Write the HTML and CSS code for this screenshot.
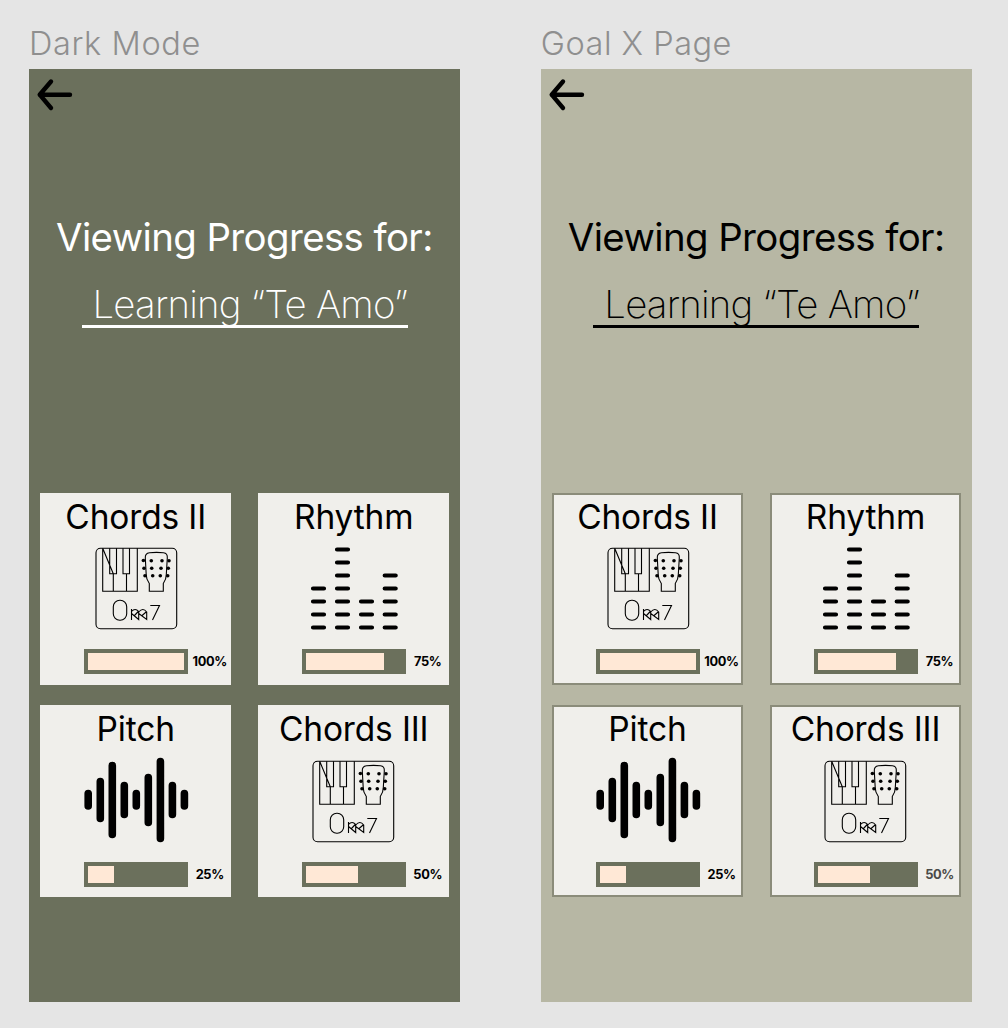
FILE: index.html
```
<!DOCTYPE html>
<html lang="en">
<head>
<meta charset="utf-8">
<title>Goal progress</title>
<link rel="stylesheet" href="styles.css">
</head>
<body>
<svg class="defs" aria-hidden="true">
  <symbol id="arrow" viewBox="0 0 40 36">
    <path d="M4.700 17.700H35M16 4.500L4.700 17.700L16 31" fill="none" stroke="currentColor" stroke-width="4.400" stroke-linecap="round" stroke-linejoin="round"/>
  </symbol>
  <symbol id="chords" viewBox="80 542 112 96">
    <g fill="none" stroke="#000" stroke-width="1.100">
      <rect x="96" y="548.300" width="80.700" height="80.500" rx="4.500"/>
      <path d="M102.700 548.300V591.300H137.300V548.300M109.700 548.300V565.500M113.300 573.700H116.500V548.300M123 548.300V573.700H129.500V548.300M109.700 565.500V573.700H113.300M113.300 573.700V591.300M126.500 573.700V591.300M102.700 548.300L113.300 573.700"/>
      <path d="M149.300 591.300V583.500C147 580.500 146.200 578 146.200 574.500L145.300 558Q145 553.200 149.500 552.700Q156.500 552 163.500 552.700Q167.700 553.100 167.300 558L166.300 574.500C166.300 578.500 165.500 580.500 163.300 583.500V591.300Z"/>
      <rect x="113.300" y="600.300" width="13.400" height="20" rx="6.500"/>
      <path d="M131.500 620V609M131.500 611.500Q135 607.500 138.700 611.500V619.500L131.500 613.500M138.700 612Q143 607 146.700 612V619.500L138.700 613.500M138.700 611L134.500 615.500M146.700 611.500L141.500 616M150.300 605.500H159.500L152.500 620"/>
    </g>
    <g>
      <circle cx="143.400" cy="560.500" r="1.800"/><circle cx="151.300" cy="560.700" r="1.800"/><circle cx="162" cy="560.700" r="1.800"/><circle cx="169" cy="560.700" r="1.800"/>
      <circle cx="144" cy="568.200" r="1.800"/><circle cx="151.700" cy="568.200" r="1.800"/><circle cx="161" cy="568.200" r="1.800"/><circle cx="168.300" cy="568.200" r="1.800"/>
      <circle cx="145" cy="575.700" r="1.800"/><circle cx="152.700" cy="575.700" r="1.800"/><circle cx="160.300" cy="575.700" r="1.800"/><circle cx="167.700" cy="575.700" r="1.800"/>
    </g>
  </symbol>
  <symbol id="rhythm" viewBox="298 542 112 96">
    <path fill="none" stroke="#000" stroke-width="4.200" stroke-linecap="round" d="M313 588.500h11M313 601.500h11M313 614.500h11M313 627.500h11M337 549.500h11M337 562.500h11M337 575.500h11M337 588.500h11M337 601.500h11M337 614.500h11M337 627.500h11M361 601.500h11M361 614.500h11M361 627.500h11M384.700 575.500h11M384.700 588.500h11M384.700 601.500h11M384.700 614.500h11M384.700 627.500h11"/>
  </symbol>
  <symbol id="pitch" viewBox="80 754.500 112 96">
    <path fill="none" stroke="#000" stroke-width="7.600" stroke-linecap="round" d="M88.200 793v12.500M100.300 781v37M112.300 765v69M124.300 785v29M136.300 793v12.500M148.300 777v45M160.400 761v77M172.400 785v29M184.400 793v12.500"/>
  </symbol>
</svg>
<main class="board">
  <section class="frame dark">
    <h2 class="frame-label">Dark Mode</h2>
    <div class="screen">
      <svg class="back"><use href="#arrow"/></svg>
      <h1 class="heading">Viewing Progress for:</h1>
      <p class="goal">Learning “Te Amo”</p>
      <div class="cards">
        <article class="card"><h3>Chords II</h3><svg class="icon"><use href="#chords"/></svg><div class="progress"><div class="bar"><div class="fill" style="width:100%"></div></div><span class="pct">100%</span></div></article>
        <article class="card"><h3>Rhythm</h3><svg class="icon"><use href="#rhythm"/></svg><div class="progress"><div class="bar"><div class="fill" style="width:81.500%"></div></div><span class="pct">75%</span></div></article>
        <article class="card"><h3>Pitch</h3><svg class="icon"><use href="#pitch"/></svg><div class="progress"><div class="bar"><div class="fill" style="width:27.500%"></div></div><span class="pct">25%</span></div></article>
        <article class="card"><h3>Chords III</h3><svg class="icon shifted"><use href="#chords"/></svg><div class="progress"><div class="bar"><div class="fill" style="width:54%"></div></div><span class="pct">50%</span></div></article>
      </div>
    </div>
  </section>
  <section class="frame light">
    <h2 class="frame-label">Goal X Page</h2>
    <div class="screen">
      <svg class="back"><use href="#arrow"/></svg>
      <h1 class="heading">Viewing Progress for:</h1>
      <p class="goal">Learning “Te Amo”</p>
      <div class="cards">
        <article class="card"><h3>Chords II</h3><svg class="icon"><use href="#chords"/></svg><div class="progress"><div class="bar"><div class="fill" style="width:100%"></div></div><span class="pct">100%</span></div></article>
        <article class="card"><h3>Rhythm</h3><svg class="icon"><use href="#rhythm"/></svg><div class="progress"><div class="bar"><div class="fill" style="width:81.500%"></div></div><span class="pct">75%</span></div></article>
        <article class="card"><h3>Pitch</h3><svg class="icon"><use href="#pitch"/></svg><div class="progress"><div class="bar"><div class="fill" style="width:27.500%"></div></div><span class="pct">25%</span></div></article>
        <article class="card"><h3>Chords III</h3><svg class="icon shifted"><use href="#chords"/></svg><div class="progress"><div class="bar"><div class="fill" style="width:54%"></div></div><span class="pct muted">50%</span></div></article>
      </div>
    </div>
  </section>
</main>
</body>
</html>
```
FILE: styles.css
```
* { box-sizing: border-box; margin: 0; }
body { background: #e5e5e5; font-family: Inter, sans-serif; font-optical-sizing: none; color: #000; }
.defs { display: none; }
.board { display: flex; gap: 80.600px; height: 1028px; padding: 24px 0 0 29px; }
.frame { width: 431.200px; }
.frame-label { height: 45px; font-size: 32.500px; line-height: 40px; font-weight: 300; letter-spacing: 0.600px; color: #8f8f8f; white-space: nowrap; }
.light .frame-label { letter-spacing: 0.500px; }
.screen { height: 933px; padding: 8px 0 0; display: flex; flex-direction: column; }
.dark .screen { background: #6b705c; }
.light .screen { background: #b7b7a4; }
.back { display: block; width: 40px; height: 36px; margin-left: 6px; flex: none; }
.heading { margin: 100px 0 0 27px; height: 48px; font-size: 38.400px; line-height: 48px; font-weight: 400; letter-spacing: -0.600px; white-space: nowrap; }
.goal { margin: 19px 0 0 52.500px; width: 326px; height: 48px; padding-left: 11px; font-size: 38.400px; line-height: 48px; font-weight: 200; letter-spacing: -0.780px; white-space: nowrap; border-bottom: 3px solid #000; }
.dark .heading, .dark .goal { color: #fff; border-color: #fff; }
.cards { display: grid; grid-template-columns: 191px 191px; grid-auto-rows: 192px; gap: 20.500px 27px; margin: 164.500px 0 0 11.200px; }
.card { background: #f0efeb; display: flex; flex-direction: column; outline-offset: -2px; }
.light .card { outline: 2px solid #8b8c7a; }
.card h3 { height: 49.500px; padding-top: 4px; font-size: 33.500px; line-height: 40px; font-weight: 400; letter-spacing: -0.150px; text-align: center; white-space: nowrap; }
.icon { display: block; width: 112px; height: 96px; margin-left: 39.800px; flex: none; }
.icon.shifted { margin-left: 38.800px; }
.progress { display: flex; align-items: center; margin: 11px 0 0 43.800px; height: 25px; }
.bar { width: 104.300px; height: 25px; padding: 4px; background: #6b705c; flex: none; }
.fill { height: 17px; background: #ffe8d6; }
.pct { flex: 1; font-size: 12.800px; line-height: 17px; font-weight: 700; letter-spacing: -0.350px; text-align: center; }
.muted { color: #4a4a48; }
```
